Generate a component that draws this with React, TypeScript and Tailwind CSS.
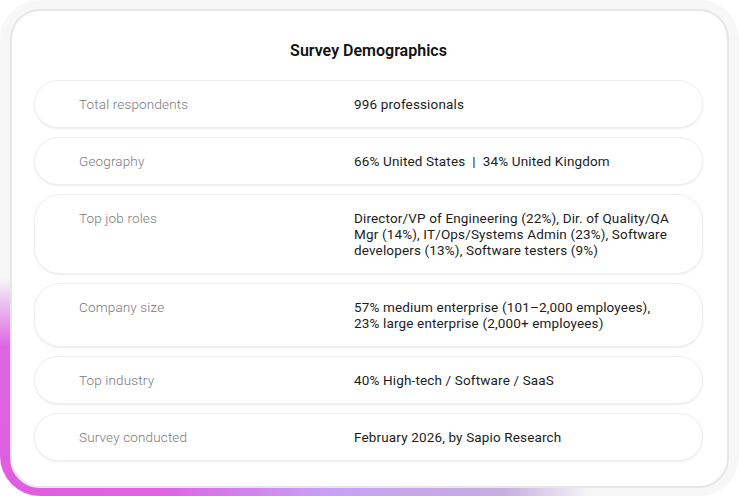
const rows: { label: string; value: string }[] = [
	{ label: "Total respondents", value: "996 professionals" },
	{ label: "Geography", value: "66% United States  |  34% United Kingdom" },
	{
		label: "Top job roles",
		value:
			"Director/VP of Engineering (22%), Dir. of Quality/QA Mgr (14%), IT/Ops/Systems Admin (23%), Software developers (13%), Software testers (9%)",
	},
	{
		label: "Company size",
		value:
			"57% medium enterprise (101–2,000 employees), 23% large enterprise (2,000+ employees)",
	},
	{ label: "Top industry", value: "40% High-tech / Software / SaaS" },
	{ label: "Survey conducted", value: "February 2026, by Sapio Research" },
];

export default function App() {
	return (
		<div className="flex h-[496px] w-[739px] bg-white font-['Roboto','Liberation_Sans',sans-serif]">
			<div className="flex h-full w-full rounded-[40px] bg-[#f7f7f7] bg-no-repeat pt-[9px] pr-[10px] pb-[8px] pl-[10px] [background-image:linear-gradient(to_right,#e05de0_0%,#de64e3_22%,#c7a2f5_45%,#c4addf_68%,rgba(247,247,247,0)_80%),linear-gradient(to_top,#e05de0_0%,#dd66e2_30%,#e9b8f0_38%,rgba(247,247,247,0)_44%)] [background-size:100%_40px,40px_100%] [background-position:left_bottom,left_bottom]">
				<div className="flex flex-1 flex-col rounded-[30px] border-2 border-[#e6e6e6] bg-white pt-[30px] pr-[24px] pl-[22px]">
					<h2 className="text-center text-[16px] leading-5 font-semibold text-[#111]">
						Survey Demographics
					</h2>
					<div className="mt-[19px] flex flex-col gap-[9px]">
						{rows.map((row) => (
							<div
								key={row.label}
								className="grid grid-cols-[275px_1fr] rounded-[26px] border border-[#efefef] bg-white py-[15px] pl-[44px] text-[13.5px] leading-4 tracking-[0.15px] shadow-[0_1px_2px_rgba(0,0,0,0.07)]"
							>
								<span className="font-light text-[#7a7a7a]">{row.label}</span>
								<span className="w-[320px] whitespace-pre-wrap text-[#1c1c1c]">
									{row.value}
								</span>
							</div>
						))}
					</div>
				</div>
			</div>
		</div>
	);
}
